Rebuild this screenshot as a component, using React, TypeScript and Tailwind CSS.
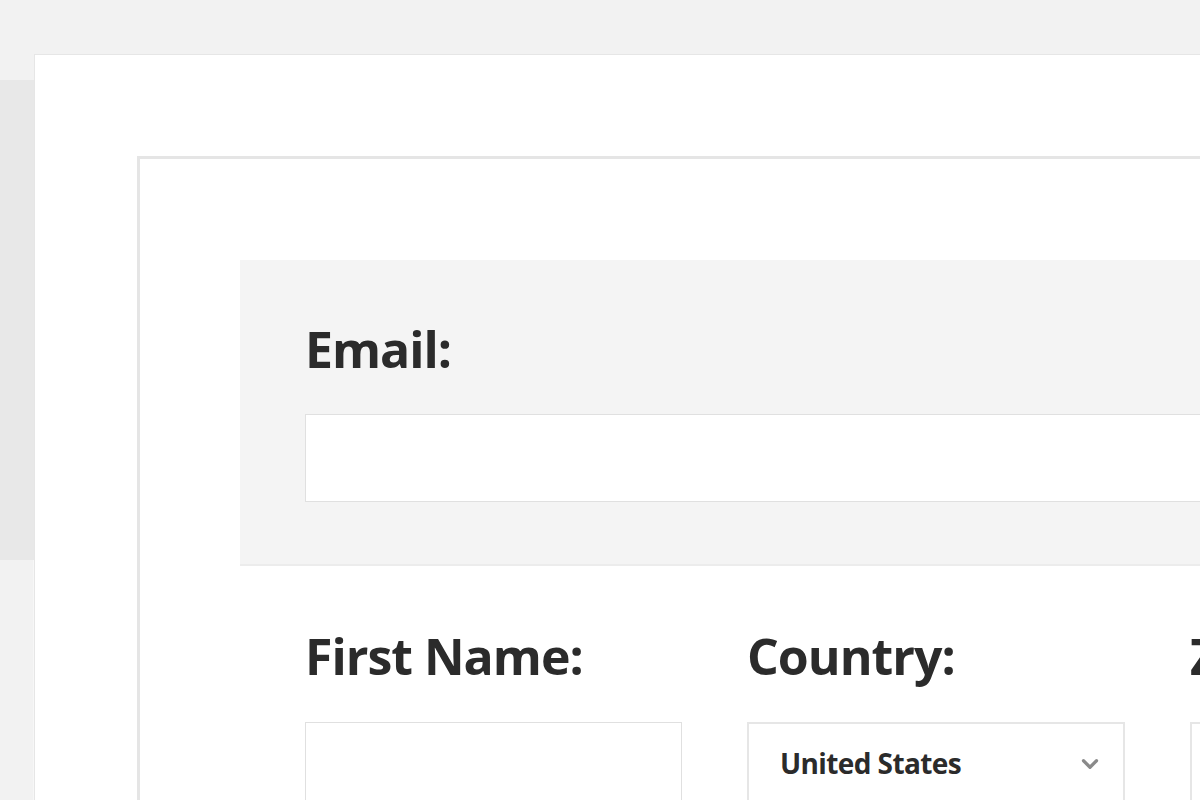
import { ChevronDown } from "lucide-react";

const font = { fontFamily: '"Open Sans", "Liberation Sans", sans-serif' };

const Label = ({ text }: { text: string }) => (
  <div className="text-[50px] leading-none font-bold text-[#2b2b2b] tracking-[-1px] whitespace-nowrap">
    {text}
  </div>
);

export default function App() {
  return (
    <div className="w-[1200px] h-[800px] overflow-hidden bg-[#f2f2f2] flex flex-col" style={font}>
      <div className="h-[54px] shrink-0" />
      <div className="flex flex-1 min-h-0">
        <div className="w-[34px] shrink-0 flex flex-col">
          <div className="h-[26px] bg-[#f2f2f2]" />
          <div className="h-[480px] bg-[#e8e8e8]" />
          <div className="flex-1 bg-[#f2f2f2] border-r border-[#f7f7f7]" />
        </div>
        <div className="flex-1 bg-white border-t border-l border-[#e6e6e6] pl-[102px] pt-[101px] overflow-hidden">
          <div className="w-[1200px] h-[800px] border-t-[3px] border-l-[3px] border-[#e5e5e5] pl-[100px] pt-[101px]">
            <div className="bg-[#f4f4f4] border-b-2 border-[#ececec] pl-[65px] pt-[64px] pb-[62px]">
              <Label text="Email:" />
              <div className="mt-[40px] h-[88px] bg-white border border-[#e0e0e0]" />
            </div>
            <div className="pl-[65px] pt-[65px] flex gap-[65px]">
              <div className="w-[377px] shrink-0">
                <Label text="First Name:" />
                <div className="mt-[41px] h-[120px] bg-white border border-[#e0e0e0]" />
              </div>
              <div className="w-[378px] shrink-0">
                <Label text="Country:" />
                <div className="mt-[41px] h-[120px] bg-white border-2 border-[#e6e6e6] flex items-start justify-between pl-[31px] pr-[20px] pt-[21px]">
                  <span className="text-[28px] leading-[36px] font-bold text-[#2b2b2b] tracking-[-0.6px]">United States</span>
                  <ChevronDown className="w-[26px] h-[26px] mt-[6px] text-[#8a8a8a]" strokeWidth={3} />
                </div>
              </div>
              <div className="w-[377px] shrink-0">
                <Label text="Zip:" />
                <div className="mt-[41px] h-[120px] bg-white border-2 border-[#e6e6e6]" />
              </div>
            </div>
          </div>
        </div>
      </div>
    </div>
  );
}
